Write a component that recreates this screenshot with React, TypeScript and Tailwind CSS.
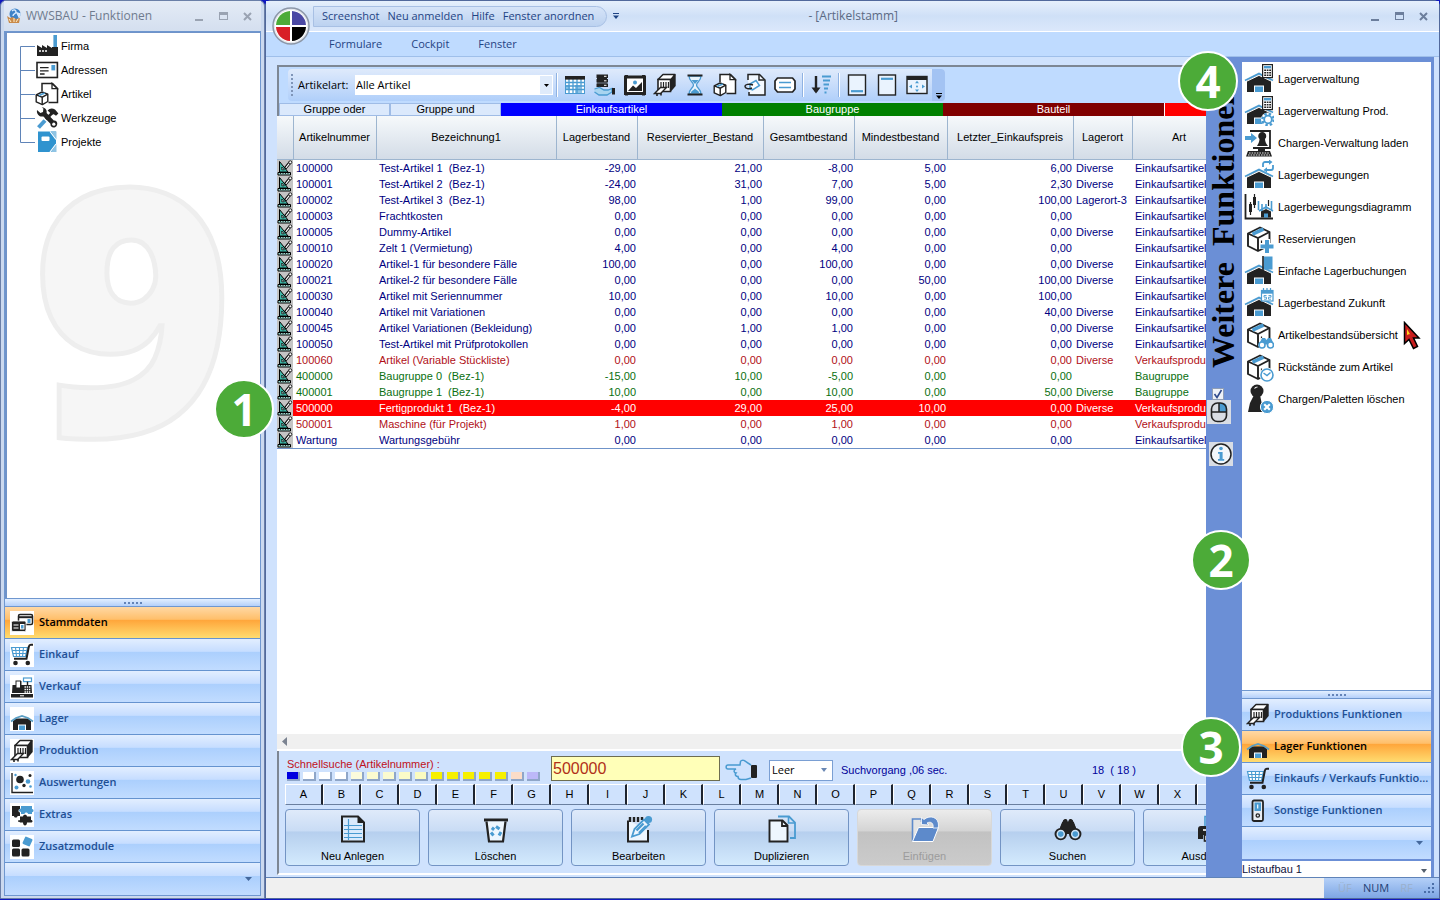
import React from "react";

type IconProps = { size?: number; vb?: number; children?: React.ReactNode; cls?: string };
const D = "#222";
const B = "#4a9bd1";

function Svg({ size = 24, vb = 24, children, cls = "" }: IconProps) {
  return (
    <svg width={size} height={size} viewBox={`0 0 ${vb} ${vb}`} fill="none" className={`shrink-0 ${cls}`} aria-hidden="true">
      {children}
    </svg>
  );
}

/* ---------- drawing parts ---------- */
const House = () => (
  <g>
    <path d="M3 16.5 L15 11 L27 16.5 V28 H3z" fill={D} />
    <path d="M1 16.5 L15 9.6 L29 16.5" stroke={B} strokeWidth="1.8" />
    <path d="M1 18 L15 11.4 L29 18" stroke="#fff" strokeWidth="1" />
    <rect x="10" y="21.5" width="10" height="6.5" fill="#fff" />
    <rect x="11" y="22.5" width="8" height="5.5" fill={B} />
  </g>
);
const Calc = () => (
  <g>
    <rect x="18.6" y="0.6" width="9.8" height="13" fill="#fff" stroke={D} strokeWidth="1.2" />
    <rect x="20" y="2" width="7" height="2.4" fill={B} />
    <path d="M20.2 6.3h6.8M20.2 8.8h6.8M20.2 11.3h6.8" stroke={D} strokeWidth="1.6" strokeDasharray="1.8 .7" />
  </g>
);
const Parcel = () => (
  <g>
    <path d="M4 9.500 L16 3.500 L25.500 8 V21.500 L14 27 L4 22z" fill="#fff" stroke={D} strokeWidth="1.9" strokeLinejoin="round" />
    <path d="M4 9.500 L14 14 L25.500 8 M14 14 V27" stroke={D} strokeWidth="1.9" />
    <path d="M8.500 10.200 L19.500 5.200" stroke={B} strokeWidth="3.6" />
    <path d="M17.500 16.500v4.500" stroke={D} strokeWidth="1.2" />
  </g>
);
const Disc = ({ fill = B }: { fill?: string }) => <circle cx="23" cy="23" r="6.6" fill={fill} stroke="#fff" strokeWidth="1" />;
const SmallBox = () => (
  <g>
    <path d="M1.2 12.8 L7 10 L12.8 12.2 V19.5 L7.4 22.6 L1.2 19.8z" fill="#fff" stroke={D} strokeWidth="1.4" strokeLinejoin="round" />
    <path d="M1.2 12.8 L7.2 15.2 L12.8 12.2 M7.2 15.2 V22.6" stroke={D} strokeWidth="1.4" />
    <path d="M4 13.6 L9.8 11" stroke={B} strokeWidth="1.6" />
  </g>
);
const Lens = () => (
  <g>
    <path d="M8.2 4h3l.8 2 .8-2h3l4.6 11-7 1.4h-2.8L3.6 15z" fill={D} />
    <path d="M7.2 5.5l2-2h1.6v2zM16.8 5.5l-2-2h-1.6v2z" fill={D} />
    <path d="M7 6h10l3 8H4z" fill={D} />
    <circle cx="5.8" cy="16.4" r="4.5" fill="#cfe4f7" stroke={D} strokeWidth="1.7" />
    <circle cx="18.2" cy="16.4" r="4.5" fill="#cfe4f7" stroke={D} strokeWidth="1.7" />
    <circle cx="5.8" cy="16.4" r="2.4" fill={B} />
    <circle cx="18.2" cy="16.4" r="2.4" fill={B} />
  </g>
);

/* ---------- 24px icons ---------- */
const draw: Record<string, React.ReactNode> = {
  factory: (
    <g>
      <path d="M2 22V11l5 3v-3l5 3v-3l5 3v8zM17 13h6v9h-6z" fill={D} />
      <rect x="18.4" y="1" width="3.6" height="12" fill={B} />
      <path d="M4 17h9" stroke="#fff" strokeWidth="1.6" strokeDasharray="2 1" />
    </g>
  ),
  card: (
    <g>
      <rect x="2" y="4.5" width="20.4" height="15" fill="#fff" stroke={D} strokeWidth="1.6" />
      <rect x="16.4" y="7" width="3.8" height="5.4" fill={B} />
      <path d="M5 9.6h8.6M5 12.8h8.6M5 16h4.6" stroke={D} strokeWidth="1.3" />
    </g>
  ),
  docbox: (
    <g>
      <path d="M7 9V1.5h10.5L22.5 6.5V20.5H13.5" fill="#fff" stroke={D} strokeWidth="1.5" />
      <path d="M17 1.5v5.2h5.4z" fill="#fff" stroke={D} strokeWidth="1.3" />
      <SmallBox />
    </g>
  ),
  tools: (
    <g>
      <path d="M3.500 21.500l6.500-7" stroke={B} strokeWidth="4" />
      <path d="M11 13.2L18.6 5.6" stroke={D} strokeWidth="2.8" />
      <path d="M12.6 4.6c2-2.6 5-2.8 7.4-1l3.4 3.8-2.4 2.4-2.2-1.6-2 .4z" fill={D} />
      <path d="M2 4l3.400 3 2.600-1L8.400 2.600 6.600 1.600c3.400-.4 5.800 2.400 5 5.400l7.200 7.600c3-.6 4.600 3 2.600 5.600-2 2.400-6.200 1.600-6-2.400L8.400 10.400C5 11.400 1.200 8.600 2 4z" fill={D} />
      <circle cx="18.8" cy="18.2" r="1.6" fill="#fff" />
    </g>
  ),
  binder: (
    <g>
      <rect x="3" y="1.5" width="18" height="20.5" fill="#2f93cf" />
      <path d="M16 1.500l5.500 8V1.500zM16 22l5.500-8V22z" fill="#8fc4e4" />
      <path d="M15 1.500l6 8M21 14l-6 8" stroke="#fff" strokeWidth="1.2" />
      <rect x="6.5" y="6.5" width="8" height="4.5" rx="1" fill="#fff" />
    </g>
  ),
  cards: (
    <g>
      <rect x="8.5" y="3.5" width="14" height="10" rx="1.5" fill="#fff" stroke={D} strokeWidth="1.5" />
      <path d="M8.500 6.200h14" stroke={D} strokeWidth="2" />
      <rect x="17.5" y="8" width="3" height="4" fill={B} />
      <rect x="1.5" y="10" width="14.5" height="10.5" rx="1.5" fill={D} stroke="#fff" strokeWidth=".8" />
      <rect x="10" y="13" width="4.5" height="5.5" fill="#fff" />
      <rect x="11" y="14" width="2.5" height="3.5" fill={B} />
      <path d="M3.500 14h5M3.500 17h5" stroke="#fff" strokeWidth="1" />
    </g>
  ),
  cart: (
    <g>
      <path d="M1.500 4.500h16l-2 9h-12z" fill="#fff" stroke={B} strokeWidth="1.2" />
      <path d="M2.200 7.500h14.600M2.800 10.500h13.400M5.500 4.500l1 9M9.500 4.500v9M13.500 4.500l-1 9" stroke={B} strokeWidth="1.1" />
      <path d="M23 1.800h-2.200c-1.200 0-1.700.7-2 2L16.500 15.800H4" stroke={D} strokeWidth="2" />
      <circle cx="5.5" cy="20" r="2.3" fill={D} />
      <circle cx="17.8" cy="20" r="2.3" fill={D} />
    </g>
  ),
  register: (
    <g>
      <path d="M2 18l.5-8H6V6h5.500v4H21.500l.5 8z" fill={D} />
      <rect x="6" y="6" width="4.5" height="7" fill="#fff" stroke={D} />
      <rect x="13.5" y="3" width="8" height="3.6" fill="#fff" stroke={B} strokeWidth="1.2" />
      <path d="M17.500 6.600V10" stroke={D} strokeWidth="1.4" />
      <path d="M14.500 12h6M14.500 14.500h6M14.500 17h6" stroke="#fff" strokeWidth="1.3" strokeDasharray="1.4 .8" />
      <rect x="1" y="19" width="22" height="3.5" fill={D} />
      <path d="M10 20.800h4" stroke="#fff" strokeWidth="1" />
    </g>
  ),
  house: (
    <g>
      <path d="M3 14l3-2.500h12L21 14v9H3z" fill={D} />
      <path d="M1 14.500l5-3.500 6-2 6 2 5 3.500" stroke="#5b9fc4" strokeWidth="1.8" />
      <rect x="8" y="17.5" width="8" height="5.5" fill="#fff" />
      <rect x="9" y="18.5" width="6" height="4.5" fill={B} />
    </g>
  ),
  machine: (
    <g>
      <path d="M5 6.500L10 1.500H22l-4 5z" fill="#fff" stroke={D} strokeWidth="1.5" strokeLinejoin="round" />
      <path d="M17.500 6.500L22.700 1.500V13l-5.200 6z" fill={D} />
      <path d="M5 6.500h12.500V18.500H5z" fill="#fff" stroke={D} strokeWidth="1.6" />
      <path d="M8 9v6M10.500 9v6M13 9v6M15.500 9v6" stroke={D} strokeWidth="1.2" />
      <path d="M1.500 20.500L7.500 14.500h6l-6 6z" fill="#fff" stroke={D} strokeWidth="1.4" />
      <path d="M4 20.500v2.500M8 20v2.500" stroke={D} strokeWidth="1.6" />
    </g>
  ),
  scatter: (
    <g>
      <path d="M2 2v19.500h21" stroke={D} strokeWidth="1.4" />
      <circle cx="10" cy="8.5" r="3.8" fill={D} />
      <circle cx="20" cy="4.5" r="1.5" fill={D} />
      <circle cx="14" cy="14.5" r="1.7" fill={D} />
      <circle cx="18" cy="10.5" r="2.3" fill={B} />
      <circle cx="6.5" cy="16.5" r="2" fill={B} />
      <circle cx="5.5" cy="4" r="1.2" fill={B} />
      <circle cx="20.5" cy="15.5" r="1.3" fill={B} />
    </g>
  ),
  puzzle: (
    <g>
      <path d="M2 3h8v3c-2 0-2 3.500 0 3.500V13H7.500c0 2-3.500 2-3.500 0H2z" fill={D} />
      <path d="M11 3h11v3c2 .2 2 3 0 3.200V11h-4c0-2-3.500-2-3.500 0H11V9C8.500 9 8.500 5.500 11 5.500z" fill={B} />
      <path d="M10 13.500h3c0-2.500 4-2.500 4 0h4V17c2 0 2 2.500 0 2.500h-4c0 4-4 4-4 0h-3c0-1-2 0-2-1.500S10 18 10 17z" fill={D} />
    </g>
  ),
  modules: (
    <g fill={D}>
      <rect x="2" y="4.5" width="8" height="7.5" rx="1.5" />
      <rect x="2" y="13.5" width="8" height="8" rx="1.5" />
      <rect x="11.5" y="13.5" width="8" height="8" rx="1.5" />
      <rect x="13.5" y="2.5" width="8" height="8" rx="1" fill={B} transform="rotate(24 17.500 6.500)" />
    </g>
  ),
  grid: (
    <g>
      <rect x="2.5" y="3.5" width="19" height="17" fill="#fff" stroke={B} strokeWidth="1" />
      <path d="M12 12h5v8h-5zM3 12h4v4H3z" fill="#8ec3e6" />
      <path d="M2.500 9.500h19M2.500 13h19M2.500 16.500h19M6 6v14.500M10 6v14.500M14 6v14.500M18 6v14.500" stroke={B} strokeWidth="1.3" />
      <rect x="2" y="3" width="20" height="3.6" fill={D} />
    </g>
  ),
  stackhand: (
    <g>
      <path d="M3.500 1.500h11.500v3.600H3.500zM3.500 6h11.500v3.600H3.500zM3.500 10.500h11.500v3.600H3.500z" fill={D} />
      <path d="M4 5.500h10M4 10h10" stroke={D} strokeWidth="1" />
      <path d="M11 3.300h2.500M11 7.800h2.500M11 12.300h2.500" stroke="#fff" strokeWidth="1" />
      <path d="M1.500 16l5-1.500 4.500 2.500h4l4-1.500v3.500l-5 3H6l-4.500-3" fill="#a8d4f0" stroke={B} strokeWidth="1.3" />
      <path d="M19 15h3v6.500h-3z" fill={D} />
    </g>
  ),
  picture: (
    <g>
      <rect x="2.5" y="4" width="19" height="16.5" fill="#fff" stroke={D} strokeWidth="3" />
      <path d="M2 2.500h3M19 2.500h3M2 22h3M19 22h3" stroke={D} strokeWidth="1.2" />
      <path d="M5 18l5-5.500 3 2.500L19 9v9z" fill={D} />
      <circle cx="12" cy="9.5" r="2" fill={B} />
    </g>
  ),
  hourglass: (
    <g>
      <path d="M6 3c0 5 4.500 6 4.500 9S6 16 6 21h12c0-5-4.500-6-4.500-9S18 8 18 3z" fill="#e9f4fc" stroke={B} strokeWidth="1.3" />
      <path d="M8.500 7h7L12 11zM8 20c0-3 4-3 4-5 0 2 4 2 4 5z" fill={B} />
      <path d="M4.500 2.500h15M4.500 21.500h15" stroke={D} strokeWidth="2.2" />
    </g>
  ),
  doctag: (
    <g>
      <path d="M5 7V1.500h11.500L22 7v15H6v-3" fill="#f3f8fe" stroke={D} strokeWidth="1.5" />
      <path d="M16 1.500v5.500h5.600" stroke={D} strokeWidth="1.4" />
      <path d="M7 11l6-3.500 3.500 5L9.500 17 7 16z" fill="#fff" stroke={B} strokeWidth="1.5" />
      <path d="M10 12c-4-1.500-8-.5-8 1.500s4 3 7 1.500" stroke={D} strokeWidth="1.4" />
    </g>
  ),
  tag: (
    <g>
      <path d="M4.500 5h15l2.500 3v8l-2.500 3h-15L2 16V8z" fill="#fff" stroke={D} strokeWidth="1.7" strokeLinejoin="round" />
      <path d="M6 9.500h12M6 14.500h12" stroke={B} strokeWidth="1.5" />
    </g>
  ),
  sort: (
    <g>
      <path d="M7 3v16" stroke={D} strokeWidth="2.4" />
      <path d="M2.500 14.500L7 20.500l4.500-6z" fill={D} />
      <path d="M13 3.500h9M14 7.500h7M14.500 11.500h5.500M15 15.500h4M15.500 19.500h2" stroke={B} strokeWidth="2.2" />
    </g>
  ),
  winbottom: (
    <g>
      <rect x="3.5" y="2" width="17" height="20" stroke={D} strokeWidth="1.4" fill="#eaf3fe" />
      <path d="M6 18.200h12" stroke={B} strokeWidth="2.2" />
    </g>
  ),
  wintop: (
    <g>
      <rect x="3.5" y="2" width="17" height="20" stroke={D} strokeWidth="1.4" fill="#eaf3fe" />
      <path d="M6 5.800h12" stroke={B} strokeWidth="2.2" />
    </g>
  ),
  winmove: (
    <g>
      <rect x="2" y="3.5" width="20" height="17" fill="#eaf3fe" stroke={D} strokeWidth="1.4" />
      <path d="M2 5.500h20" stroke={D} strokeWidth="3" />
      <path d="M12 7.800l2 2.400h-4zM12 19l2-2.400h-4zM4 13.400l3-2v4zM20 13.400l-3-2v4z" fill={B} />
      <circle cx="12" cy="13.4" r="1" fill={B} />
    </g>
  ),
  switch: (
    <g>
      <rect x="6.5" y="1.5" width="10.5" height="20.5" rx="1.5" fill="#e8edf3" stroke={D} strokeWidth="1.8" />
      <rect x="8.5" y="3.5" width="6.5" height="8.5" fill={B} />
      <path d="M11.700 5.500v4" stroke="#fff" strokeWidth="1.2" />
      <circle cx="11.8" cy="16.5" r="1.7" stroke={D} strokeWidth="1.3" />
    </g>
  ),
  mouse: (
    <g>
      <path d="M12 3h4c2.500 0 4 2 4 4.500V12h-8z" fill={B} />
      <rect x="4.5" y="3" width="15" height="18.5" rx="6" stroke={D} strokeWidth="1.6" />
      <path d="M12 3v9M4.500 12h15" stroke={D} strokeWidth="1.5" />
    </g>
  ),
  info: (
    <g>
      <circle cx="12" cy="12" r="10" fill="#f3f7fb" stroke={D} strokeWidth="1.5" />
      <circle cx="12" cy="6.500" r="1.800" fill={B} />
      <path d="M9 10h4.600v7h1.600v1.800H9V17h1.600v-5.200H9z" fill={B} />
    </g>
  ),
};

/* ---------- action icons, 28px box ---------- */
const action: Record<string, React.ReactNode> = {
  sheet: (
    <g>
      <path d="M3 1.500h16l6 6v19H3z" fill="#d9eafc" stroke={D} strokeWidth="2" />
      <path d="M18.500 1.500v6.500h7z" fill={D} />
      <path d="M5 10.500h18M5 14.500h18M5 18.500h18M5 22.500h18M9.500 4v21" stroke={B} strokeWidth="1.2" />
    </g>
  ),
  trash: (
    <g>
      <path d="M2 3.500h24v3H2z" fill={D} />
      <path d="M4.500 6.500l2.500 20h14l2.500-20" fill="#eef6fe" stroke={D} strokeWidth="2.2" />
      <path d="M14 11.500l3.500 2.500M19 17l-2 3.500M11.500 20.500L9 17.500M10 15l2-2.500" stroke={B} strokeWidth="3" />
    </g>
  ),
  edit: (
    <g>
      <path d="M3 5.500V26.500h20V15" stroke={D} strokeWidth="2" fill="#eef6fe" />
      <path d="M5 2v5M9 2v5M13 2v5M17 2v3" stroke={D} strokeWidth="2.4" />
      <path d="M7 21.500l2.500-7.500L19 4.500l5 5-9.500 9.500z" fill="#eef6fe" stroke={B} strokeWidth="1.8" />
      <path d="M11.500 15.500l7-7M14 18l7-7" stroke={B} strokeWidth="2.4" />
      <circle cx="23.5" cy="4.5" r="3.6" fill={B} />
    </g>
  ),
  copy: (
    <g>
      <path d="M10 1.500h11l6 6V23h-5" stroke={B} strokeWidth="1.8" />
      <path d="M20.500 1.500V8H27" stroke={B} strokeWidth="1.6" />
      <path d="M1.500 5.500h13l5 5v16h-18z" fill="#eef6fe" stroke={D} strokeWidth="1.9" />
      <path d="M14 5.500v5.500h5.500" stroke={D} strokeWidth="1.8" />
    </g>
  ),
  paste: (
    <g>
      <path d="M1.500 26V4h9v3" fill="#e4e4e4" stroke="#5d8acb" strokeWidth="1.6" />
      <path d="M1.500 26.500l6-14h20l-5.500 14z" fill="#5d8acb" stroke="#fff" strokeWidth="1" />
      <path d="M10.500 9.500V2.500l2.500 2c6-5 15-2.500 14.500 6.500l-.5 2h-5c1-5-2.500-7-6-5l2 2z" fill="#5d8acb" stroke="#fff" strokeWidth=".8" />
    </g>
  ),
  search: <g transform="scale(1.166)"><Lens /></g>,
  print: (
    <g>
      <path d="M8 12V1.500h12V12" fill="#eef6fe" stroke={B} strokeWidth="1.6" />
      <path d="M4 11h20c2 0 3 1.500 3 3v10H22v-4H6v4H1V14c0-2 1-3 3-3z" fill={D} />
      <path d="M6 15h10" stroke="#fff" strokeWidth="1.6" />
      <rect x="7.5" y="20" width="13" height="6" fill="#fff" stroke={D} strokeWidth="1.6" />
    </g>
  ),
};

/* ---------- side list icons, 30px box ---------- */
const side: { label: string; icon: React.ReactNode }[] = [
  { label: "Lagerverwaltung", icon: <><House /><Calc /></> },
  {
    label: "Lagerverwaltung Prod.",
    icon: (
      <>
        <House /><Calc />
        <circle cx="24" cy="23.5" r="7" fill="#fff" />
        <circle cx="24" cy="23.5" r="5.6" stroke={B} strokeWidth="2.4" strokeDasharray="2.4 2" />
        <circle cx="24" cy="23.5" r="3.8" fill="#fff" stroke={B} strokeWidth="1.8" />
      </>
    ),
  },
  {
    label: "Chargen-Verwaltung laden",
    icon: (
      <>
        <path d="M6 3h20v17H9" stroke={D} strokeWidth="1.8" />
        <path d="M13 18c1-2 2.500-4 2.500-7a4 4 0 1 1 5.500 0c0 3 1.500 5 3 7z" fill={D} />
        <path d="M1 8h6V5l6 5-6 5v-3H1z" fill={B} />
        <path d="M14 20h7v3h-7z" fill={D} />
        <path d="M4 23h22l2 5.500H2z" fill={D} />
        <path d="M5 25h20M4 27h22" stroke="#fff" strokeWidth=".9" strokeDasharray="1.6 1" />
      </>
    ),
  },
  {
    label: "Lagerbewegungen",
    icon: (
      <>
        <House />
        <path d="M19 7V4a2 2 0 0 1 2-2h5M29 5v3a2 2 0 0 1-2 2h-5" stroke={B} strokeWidth="1.8" />
        <path d="M25 -.5l3.500 2.500L25 4.800zM23 7.200L19.500 10l3.500 2.500z" fill={B} />
      </>
    ),
  },
  {
    label: "Lagerbewegungsdiagramm",
    icon: (
      <>
        <path d="M1.500 2v24.500H29" stroke={D} strokeWidth="1.8" />
        <path d="M6.500 10v13M10.500 2v14" stroke={D} strokeWidth="1.2" />
        <path d="M5 12h3v8H5zM9 5h3v8H9z" fill={D} />
        <path d="M14.500 9v9M18 12v9M22 12v5M27.500 9v9" stroke={B} strokeWidth="1.6" />
        <path d="M15 19l7-4 7 4" stroke={B} strokeWidth="1.6" />
        <path d="M17 19.500l5-2.500 5 2.500v6H17z" fill={D} />
        <rect x="20" y="21.5" width="4" height="4" fill={B} />
        <path d="M24.500 8v6" stroke={D} strokeWidth="1.2" />
      </>
    ),
  },
  {
    label: "Reservierungen",
    icon: (<><Parcel /><path d="M23 15v14M16 22h14" stroke="#fff" strokeWidth="6" /><path d="M23 16v13M16.500 22.500h13" stroke={B} strokeWidth="4" /></>),
  },
  {
    label: "Einfache Lagerbuchungen",
    icon: (<><House /><rect x="19.5" y="0.5" width="9" height="13" fill={B} /><path d="M19 0v14" stroke={D} strokeWidth="1.6" /></>),
  },
  {
    label: "Lagerbestand Zukunft",
    icon: (
      <>
        <House />
        <rect x="17.5" y="2.5" width="11.5" height="10.5" fill="#fff" stroke={B} strokeWidth="1.2" />
        <path d="M17.500 4.200h11.500" stroke={B} strokeWidth="3" />
        <path d="M19.500 0v3M23 0v3M26.500 0v3" stroke={B} strokeWidth="1.2" />
        <path d="M22.500 7.500h-2.500v1.700h2.500v2H20M24.500 7.500h2.500v1.700h-2.500v2H27" stroke={B} strokeWidth=".9" />
      </>
    ),
  },
  {
    label: "Artikelbestandsübersicht",
    icon: (
      <>
        <Parcel />
        <path d="M14 26l3-8h12l2 8z" fill="#fff" />
        <path d="M15 24.500l3-6.500h3l1.500 2 1.500-2h3l3 6.500z" fill={B} />
        <circle cx="18" cy="25" r="3" fill="#fff" stroke={B} strokeWidth="1.6" />
        <circle cx="26.5" cy="25" r="3" fill="#fff" stroke={B} strokeWidth="1.6" />
      </>
    ),
  },
  {
    label: "Rückstände zum Artikel",
    icon: (<><Parcel /><circle cx="23" cy="23" r="7.5" fill="#fff" /><circle cx="23" cy="23" r="6" fill="#fff" stroke={B} strokeWidth="1.6" /><path d="M19.500 21l3.500 2.500 3.500-3" stroke={B} strokeWidth="1.5" /></>),
  },
  {
    label: "Chargen/Paletten löschen",
    icon: (
      <>
        <circle cx="13" cy="7" r="6.5" fill={D} />
        <path d="M10 11h6l3.500 17H4l2-9z" fill={D} />
        <path d="M10.500 4.500a4 4 0 0 1 3-1.500" stroke="#fff" strokeWidth="1.2" />
        <Disc />
        <path d="M20.200 20.200l5.600 5.600M25.800 20.200l-5.600 5.600" stroke="#fff" strokeWidth="2.2" />
      </>
    ),
  },
];

const tree = [
  ["Firma", "factory"],
  ["Adressen", "card"],
  ["Artikel", "docbox"],
  ["Werkzeuge", "tools"],
  ["Projekte", "binder"],
];

const leftNav = [
  ["Stammdaten", "cards"],
  ["Einkauf", "cart"],
  ["Verkauf", "register"],
  ["Lager", "house"],
  ["Produktion", "machine"],
  ["Auswertungen", "scatter"],
  ["Extras", "puzzle"],
  ["Zusatzmodule", "modules"],
];

const rightNav = [
  ["Produktions Funktionen", "machine"],
  ["Lager Funktionen", "house"],
  ["Einkaufs / Verkaufs Funktio...", "cart"],
  ["Sonstige Funktionen", "switch"],
];

type Tone = "blue" | "red" | "green" | "sel";
type Row = [string, string, string, string, string, string, string, string, string, Tone];
const E = "Einkaufsartikel";
const V = "Verkaufsprodukt";
const rows: Row[] = [
  ["100000", "Test-Artikel 1  (Bez-1)", "-29,00", "21,00", "-8,00", "5,00", "6,00", "Diverse", E, "blue"],
  ["100001", "Test-Artikel 2  (Bez-1)", "-24,00", "31,00", "7,00", "5,00", "2,30", "Diverse", E, "blue"],
  ["100002", "Test-Artikel 3  (Bez-1)", "98,00", "1,00", "99,00", "0,00", "100,00", "Lagerort-3", E, "blue"],
  ["100003", "Frachtkosten", "0,00", "0,00", "0,00", "0,00", "0,00", "", E, "blue"],
  ["100005", "Dummy-Artikel", "0,00", "0,00", "0,00", "0,00", "0,00", "Diverse", E, "blue"],
  ["100010", "Zelt 1 (Vermietung)", "4,00", "0,00", "4,00", "0,00", "0,00", "", E, "blue"],
  ["100020", "Artikel-1 für besondere Fälle", "100,00", "0,00", "100,00", "0,00", "0,00", "Diverse", E, "blue"],
  ["100021", "Artikel-2 für besondere Fälle", "0,00", "0,00", "0,00", "50,00", "100,00", "Diverse", E, "blue"],
  ["100030", "Artikel mit Seriennummer", "10,00", "0,00", "10,00", "0,00", "100,00", "", E, "blue"],
  ["100040", "Artikel mit Variationen", "0,00", "0,00", "0,00", "0,00", "40,00", "Diverse", E, "blue"],
  ["100045", "Artikel Variationen (Bekleidung)", "0,00", "1,00", "1,00", "0,00", "0,00", "Diverse", E, "blue"],
  ["100050", "Test-Artikel mit Prüfprotokollen", "0,00", "0,00", "0,00", "0,00", "0,00", "Diverse", E, "blue"],
  ["100060", "Artikel (Variable Stückliste)", "0,00", "0,00", "0,00", "0,00", "0,00", "Diverse", V, "red"],
  ["400000", "Baugruppe 0  (Bez-1)", "-15,00", "10,00", "-5,00", "0,00", "0,00", "", "Baugruppe", "green"],
  ["400001", "Baugruppe 1  (Bez-1)", "10,00", "0,00", "10,00", "0,00", "50,00", "Diverse", "Baugruppe", "green"],
  ["500000", "Fertigprodukt 1  (Bez-1)", "-4,00", "29,00", "25,00", "10,00", "0,00", "Diverse", V, "sel"],
  ["500001", "Maschine (für Projekt)", "1,00", "0,00", "1,00", "0,00", "0,00", "", V, "red"],
  ["Wartung", "Wartungsgebühr", "0,00", "0,00", "0,00", "0,00", "0,00", "", E, "blue"],
];
const tones: Record<Tone, string> = {
  blue: "text-[#00007f]",
  red: "text-[#b01018]",
  green: "text-[#0a7010]",
  sel: "bg-[#ff0000] text-white",
};
const heads = ["Artikelnummer", "Bezeichnung1", "Lagerbestand", "Reservierter_Bestand", "Gesamtbestand", "Mindestbestand", "Letzter_Einkaufspreis", "Lagerort", "Art"];

const blocks = [
  "bg-[#0000e0]", "bg-white", "bg-white", "bg-white", "bg-[#fbfbdc]", "bg-[#fbfbd0]", "bg-[#fbfbd0]", "bg-[#fbfbc8]", "bg-[#fbfbc0]",
  "bg-[#f6f000]", "bg-[#f6f000]", "bg-[#f6f000]", "bg-[#f6f000]", "bg-[#f6f000]", "bg-[#fbdcc8]", "bg-[#bcb8f8]",
];

const actions: [string, string][] = [
  ["Neu Anlegen", "sheet"],
  ["Löschen", "trash"],
  ["Bearbeiten", "edit"],
  ["Duplizieren", "copy"],
  ["Einfügen", "paste"],
  ["Suchen", "search"],
  ["Ausdrucken", "print"],
];

const sans = "font-['Liberation_Sans',Arial,sans-serif]";
const ui = "font-['Open_Sans','Noto_Sans',sans-serif]";

function WinButtons({ tone }: { tone: string }) {
  return (
    <div className={`ml-auto flex items-center gap-3 ${tone}`}>
      <button aria-label="Minimieren" className="flex h-3 w-3 items-end justify-center pb-px"><span className="h-0.5 w-2 bg-current" /></button>
      <button aria-label="Maximieren" className="flex h-3 w-3 items-center justify-center"><span className="h-2 w-[9px] border border-t-[3px] border-current" /></button>
      <button aria-label="Schließen" className="flex h-3 w-3 items-center justify-center">
        <svg width="9" height="9" viewBox="0 0 9 9"><path d="M1 1l7 7M8 1L1 8" stroke="currentColor" strokeWidth="2" /></svg>
      </button>
    </div>
  );
}

function Splitter() {
  return (
    <div className="flex h-[9px] shrink-0 items-center justify-center gap-0.5 border-y border-[#6f97cf] bg-gradient-to-b from-[#e3efff] to-[#b4d0fa]">
      {[0, 1, 2, 3, 4].map((i) => <span key={i} className="h-0.5 w-0.5 bg-[#6484b8]" />)}
    </div>
  );
}

function NavItem({ label, icon, active, tile }: { label: string; icon: string; active: boolean; tile?: boolean }) {
  const bg = active
    ? "bg-[linear-gradient(#ffd8a4,#ffbf6a_40%,#ffa53a_42%,#ffdc70)] text-black"
    : "bg-[linear-gradient(#e2eeff,#c6ddff_40%,#abcffd_42%,#c1dcff)] text-[#1f4f94]";
  return (
    <button className={`flex h-8 w-full shrink-0 items-center border-b border-[#6593cf] text-left text-[11px] font-semibold whitespace-nowrap ${tile ? "gap-[5px] pl-[5px]" : "gap-1 pl-1"} ${ui} ${bg}`}>
      <span className={tile ? "bg-white" : ""}><Svg>{draw[icon]}</Svg></span>
      <span>{label}</span>
    </button>
  );
}

function NavFoot() {
  return (
    <button aria-label="Schaltflächen konfigurieren" className="flex h-8 w-full shrink-0 items-center justify-end bg-[linear-gradient(#e2eeff,#c6ddff_40%,#abcffd_42%,#c1dcff)] pr-2">
      <svg width="7" height="4" viewBox="0 0 7 4"><path d="M0 0h7L3.500 4z" fill="#44689c" /></svg>
    </button>
  );
}

function Badge({ n, place }: { n: string; place: string }) {
  return (
    <div className={`absolute z-20 flex h-[60px] w-[60px] items-center justify-center rounded-full border-2 border-white bg-[#4cab38] text-[44px] leading-none font-bold text-white ${ui} ${place}`}>
      {n}
    </div>
  );
}

function RowMark() {
  return (
    <svg width="16" height="16" viewBox="0 0 16 16" className="block" aria-hidden="true">
      <rect width="16" height="16" fill="#c4c4c4" />
      <path d="M2.500 1.500v10.500h8.500z" fill="#3fb8a8" stroke="#000" />
      <path d="M4.800 7v2.800h2.500z" fill="#fff" stroke="#000" strokeWidth=".8" />
      <path d="M1 12.500h12.500v2.500H1z" fill="#9fd8d0" stroke="#000" />
      <path d="M3.500 12.500v1.500M6 12.500v1.500M8.500 12.500v1.500M11 12.500v1.500" stroke="#000" strokeWidth=".8" />
      <path d="M8 8.500l5-6" stroke="#000" strokeWidth="3" />
      <path d="M8.800 7.800l4-5" stroke="#fff" strokeWidth="1.2" />
      <circle cx="13.3" cy="2.3" r="1.5" fill="#fff" stroke="#000" strokeWidth=".8" />
    </svg>
  );
}

function LeftWindow() {
  return (
    <section className="relative flex w-[265px] shrink-0 flex-col rounded-t-md border border-[#6a7fa8] bg-[#cbd9ef] px-[3px] pb-0.5">
      <header className="flex h-[30px] shrink-0 items-center gap-1 bg-gradient-to-b from-[#e4ebf6] to-[#d4dfef] px-0.5 pr-2">
        <Svg size={16} vb={16}>
          <circle cx="9" cy="6" r="5.5" fill="#3c82c8" />
          <path d="M6 3c2-2 4-1 4 1s-3 1-3 4M11 5l3 1-1 3z" stroke="#d7eaff" strokeWidth="1.4" />
          <path d="M1 8l3 2 3-1 3 2 4-1-1 5H3z" fill="#c98a4a" />
          <path d="M3 11l2 3M8 10v4M12 11l-2 3" stroke="#fff2d0" strokeWidth="1" />
        </Svg>
        <h1 className={`text-xs text-[#6f7b8e] ${ui}`}>WWSBAU - Funktionen</h1>
        <WinButtons tone="text-[#9aa3b2]" />
      </header>
      <div className="flex min-h-0 flex-1 flex-col border border-[#6f97cf]">
        <div className="relative min-h-0 flex-1 overflow-hidden border-t border-l-2 border-[#6f93c9] bg-white">
          <div aria-hidden="true" className="absolute top-[98px] left-[25px] font-['Open_Sans','Noto_Sans',sans-serif] text-[344px] leading-[344px] font-extrabold text-[#f6f6f6] [-webkit-text-stroke:5px_#eeeeee]">9</div>
          <ul className={`relative pt-px pl-[13px] text-[11px] text-black ${sans}`}>
            {tree.map(([label, icon], i) => (
              <li key={label}>
                <a href="#" className="flex h-6 items-center">
                  <svg width="15" height="24" viewBox="0 0 15 24" fill="none" aria-hidden="true">
                    <path d={i === 0 ? "M.5 24V12.500H15" : i === tree.length - 1 ? "M.5 0V12.500H15" : "M.5 0V24M0 12.500H15"} stroke="#5f84b8" />
                  </svg>
                  <Svg size={24}>{draw[icon]}</Svg>
                  <span className="pl-0.5">{label}</span>
                </a>
              </li>
            ))}
          </ul>
        </div>
        <Splitter />
        <nav className="flex flex-col">
          {leftNav.map(([label, icon], i) => <NavItem key={label} label={label} icon={icon} active={i === 0} tile />)}
          <NavFoot />
        </nav>
      </div>
      <Badge n="1" place="top-[378px] left-[213px]" />
    </section>
  );
}

function Toolbar() {
  const tool = (k: string) => (
    <button key={k} aria-label={k} className="flex h-7 w-[30px] items-center justify-center"><Svg>{draw[k]}</Svg></button>
  );
  const sep = <span className="mx-0.5 h-6 w-0.5 border-l border-[#8fb2e2] bg-white" />;
  return (
    <div className="flex h-9 shrink-0 items-center pl-[9px]">
      <div className="flex h-8 items-center rounded bg-gradient-to-b from-[#dfeafb] to-[#b0cffa] pl-[3px]">
        <svg width="2" height="22" viewBox="0 0 2 22" aria-hidden="true"><path d="M1 0v22" stroke="#7f95b8" strokeWidth="2" strokeDasharray="2 2" /></svg>
        <label htmlFor="art" className={`w-[62px] pl-[5px] text-[11px] text-black ${ui}`}>Artikelart:</label>
        <div className="relative mr-px">
          <select id="art" className={`block h-5 w-[198px] appearance-none border border-white bg-white text-[11px] text-black ${ui}`}><option>Alle Artikel</option></select>
          <span className="pointer-events-none absolute top-px right-px flex h-[18px] w-3 items-center justify-center bg-[#dfebfb]">
            <svg width="5" height="3" viewBox="0 0 5 3"><path d="M0 0h5L2.500 3z" fill="#000" /></svg>
          </span>
        </div>
        {sep}
        {["grid", "stackhand", "picture", "machine", "hourglass", "docbox", "doctag", "tag"].map(tool)}
        {sep}
        {tool("sort")}
        {sep}
        {["winbottom", "wintop", "winmove"].map(tool)}
        <span className="flex h-8 w-[13px] items-end justify-center rounded-r bg-[#a3c3f3] pb-0.5">
          <svg width="6" height="6" viewBox="0 0 6 6"><path d="M0 .5h6" stroke="#000" /><path d="M0 2.500h6L3 6z" fill="#000" /></svg>
        </span>
      </div>
    </div>
  );
}

function Grid() {
  return (
    <div className="min-h-0 flex-1 overflow-hidden bg-white">
      <table className={`w-[949px] table-fixed border-collapse text-[11px] ${sans}`}>
        <colgroup>
          <col className="w-4" /><col className="w-[83px]" /><col className="w-[180px]" /><col className="w-[81px]" /><col className="w-[126px]" />
          <col className="w-[91px]" /><col className="w-[93px]" /><col className="w-[126px]" /><col className="w-[59px]" /><col className="w-[94px]" />
        </colgroup>
        <thead>
          <tr className="h-[43px] bg-gradient-to-b from-[#f6f9fb] to-[#d3dce7]">
            <th aria-label="Status" className="border-r border-b border-[#9db5cf]" />
            {heads.map((h) => <th key={h} className="border-r border-b border-[#9db5cf] p-0 text-center font-normal text-black">{h}</th>)}
          </tr>
        </thead>
        <tbody>
          {rows.map((r) => (
            <tr key={r[0]} className={`h-4 leading-4 last:border-b last:border-[#6f93c9] ${tones[r[9]]}`}>
              <td className="p-0"><RowMark /></td>
              {r.slice(0, 9).map((c, i) => (
                <td key={i} className={`overflow-hidden py-0 whitespace-pre ${i >= 2 && i <= 6 ? "pr-px text-right" : "pl-[3px] text-left"}`}>{c}</td>
              ))}
            </tr>
          ))}
        </tbody>
      </table>
    </div>
  );
}

function SearchPanel() {
  return (
    <div className={`shrink-0 overflow-hidden border-b-2 border-l-2 border-b-white border-l-[#7d8794] bg-[#cfe2fd] pt-0.5 pb-[7px] pl-1.5 ${sans}`}>
      <div className="flex h-[31px] items-end pb-[3px]">
        <div className="w-[266px] shrink-0 pl-0.5">
          <label htmlFor="quick" className="block text-[11px] leading-4 text-[#c01020]">Schnellsuche (Artikelnummer) :</label>
          <div className="flex gap-[3px]">
            {blocks.map((b, i) => <span key={i} className={`h-[9px] w-[13px] border-r-2 border-b-2 border-[#8fa6c8] ${b}`} />)}
          </div>
        </div>
        <input id="quick" defaultValue="500000" className="h-[25px] w-[169px] shrink-0 border border-[#6d6d50] bg-[#ffffb8] pl-px text-base text-[#b03018]" />
        <svg width="32" height="22" viewBox="0 0 32 22" fill="none" className="ml-[5px] shrink-0" aria-hidden="true">
          <path d="M26 6l-7-4.500c-1-.7-3 0-3.500 1L15 6H3C.5 6 .5 10 3 10h8c-3 1-2 4 0 4-1.500 2 0 3.500 2 3.500 0 2 1 3 3 3h5l5-1.500" stroke={B} strokeWidth="1.5" />
          <rect x="26" y="6" width="6" height="13" rx="1" fill={D} />
        </svg>
        <div className="relative ml-3 shrink-0">
          <select aria-label="Filter" className={`block h-[21px] w-16 appearance-none border border-[#7a9fd3] bg-white pl-0.5 text-[11px] text-black ${ui}`}><option>Leer</option></select>
          <svg width="6" height="4" viewBox="0 0 6 4" className="pointer-events-none absolute top-2 right-1.5"><path d="M0 0h6L3 4z" fill="#6a88b4" /></svg>
        </div>
        <span className="w-[259px] shrink-0 pl-2 text-[11px] leading-[21px] text-[#00009a]">Suchvorgang ,06 sec.</span>
        <span className="shrink-0 text-[11px] leading-[21px] whitespace-pre text-[#00009a]">18  ( 18 )</span>
      </div>
      <div className="flex h-[21px]">
        {"ABCDEFGHIJKLMNOPQRSTUVWXY".split("").map((c) => (
          <button key={c} className="w-[38px] shrink-0 border-t border-r-2 border-b border-l border-t-white border-r-[#1d2430] border-b-[#6a7f9f] border-l-white text-[11px] text-black">{c}</button>
        ))}
      </div>
      <div className="mt-1 flex gap-2">
        {actions.map(([label, icon]) => {
          const off = label === "Einfügen";
          const look = off
            ? "border-[#d8d8d8] bg-[linear-gradient(#ececec,#d4d4d4_38%,#c2c2c2_40%,#cbcbcb)] text-[#9c9c9c]"
            : "border-[#7394c4] bg-[linear-gradient(#dfeafa,#c9dcf5_38%,#b6cfee_40%,#d3eafd)] text-black";
          return (
            <button key={label} disabled={off} className={`flex h-[57px] w-[135px] shrink-0 flex-col items-center justify-between rounded-sm border pt-[5px] pb-px text-[11px] leading-4 ${look}`}>
              <Svg size={28} vb={28}>{action[icon]}</Svg>
              <span>{label}</span>
            </button>
          );
        })}
      </div>
    </div>
  );
}

function SideBar() {
  return (
    <aside className="relative flex w-[36px] shrink-0 flex-col items-center bg-[#6b8fd6]">
      <div className="mr-0.5 h-[311px] shrink-0 rotate-180 font-['Liberation_Serif','Times_New_Roman',serif] text-[32px] leading-[34px] font-bold whitespace-pre text-black [writing-mode:vertical-rl]">Weitere  Funktionen</div>
      <label className="mt-5 mr-3 flex h-3 w-3 shrink-0 items-center justify-center border border-[#8f9db5] bg-[#eef2f8]">
        <input type="checkbox" defaultChecked aria-label="Mausfunktion" className="peer sr-only" />
        <svg width="10" height="10" viewBox="0 0 10 10" fill="none"><path d="M1.500 5l2.500 3.500L8.500 1" stroke="#2f4a8c" strokeWidth="1.6" /></svg>
      </label>
      <button aria-label="Maus" className="mr-2.5 bg-[#d9dde4]"><Svg>{draw.mouse}</Svg></button>
      <button aria-label="Info" className="mt-[18px] mr-1.5 bg-[#d9dde4]"><Svg>{draw.info}</Svg></button>
      <Badge n="2" place="top-[473px] left-[-15px]" />
      <Badge n="3" place="top-[660px] left-[-25px]" />
      <Badge n="4" place="top-[-6px] left-[-28px]" />
    </aside>
  );
}

function FunctionPanel() {
  return (
    <section className="flex w-[192px] shrink-0 flex-col border-t-[5px] border-r-[3px] border-[#6b8fd6]">
      <ul className={`relative min-h-0 flex-1 bg-white pt-px pl-0.5 text-[11px] text-black ${sans}`}>
        {side.map((s) => (
          <li key={s.label}>
            <a href="#" className="flex h-8 items-center gap-1"><Svg size={30} vb={30}>{s.icon}</Svg>{s.label}</a>
          </li>
        ))}
        <li aria-hidden="true" className="absolute top-[259px] right-2.5">
          <svg width="18" height="30" viewBox="0 0 18 30">
            <path d="M1.500 1.500v21l4.500-4 4.500 9 4-2-4-8.500h5.500z" fill="#c81e1e" stroke="#000" strokeWidth="1.5" />
            <path d="M4 8v6l2.500-1 1 1z" fill="#ffd21e" />
          </svg>
        </li>
      </ul>
      <Splitter />
      <nav className="flex flex-col overflow-hidden">
        {rightNav.map(([label, icon], i) => <NavItem key={label} label={label} icon={icon} active={i === 1} />)}
        <NavFoot />
      </nav>
      <div className="relative border-t-2 border-[#6b8fd6]">
        <select aria-label="Listaufbau" className={`block h-4 w-full appearance-none bg-white text-[11px] text-[#10103c] ${sans}`}><option>Listaufbau 1</option></select>
        <svg width="6" height="4" viewBox="0 0 6 4" className="pointer-events-none absolute top-2 right-1"><path d="M0 0h6L3 4z" fill="#55606e" /></svg>
      </div>
    </section>
  );
}

function MainWindow() {
  return (
    <section className="relative flex min-w-0 flex-1 flex-col rounded-t-md border border-[#51699c] bg-[#cfe2fd]">
      <header className={`flex h-[30px] shrink-0 items-center bg-[linear-gradient(#e6f0fc,#cfe0f7_50%,#dbe8fb)] pr-2.5 text-[11px] text-[#1f4484] ${ui}`}>
        <div className="ml-[47px] flex h-[21px] items-center gap-2 rounded-r-full border border-[#a8c0e4] bg-gradient-to-b from-[#d6e4f8] to-[#bcd2f0] pr-3 pl-2">
          <a href="#">Screenshot</a><a href="#">Neu anmelden</a><a href="#">Hilfe</a><a href="#">Fenster anordnen</a>
        </div>
        <svg width="6" height="6" viewBox="0 0 6 6" className="ml-1.5" aria-hidden="true"><path d="M0 .5h6" stroke="#1f4484" /><path d="M0 2.500h6L3 6z" fill="#1f4484" /></svg>
        <h2 className="flex-1 pr-[282px] text-center text-xs text-[#5b6a84]">- [Artikelstamm]</h2>
        <WinButtons tone="text-[#6c7e9c]" />
      </header>
      <nav className={`flex h-[26px] shrink-0 items-center gap-[29px] border-y border-t-white border-b-[#9fbfea] bg-[#bfdbff] pl-[63px] text-[11px] text-[#1f4484] ${ui}`}>
        <a href="#">Formulare</a><a href="#">Cockpit</a><a href="#">Fenster</a>
      </nav>
      <button aria-label="Anwendungsmenü" className="absolute top-[5px] left-[5px] z-10">
        <svg width="40" height="40" viewBox="0 0 40 40">
          <circle cx="20" cy="20" r="18" fill="#e4e8ee" stroke="#8c97a8" strokeWidth="1.5" />
          <circle cx="20" cy="20" r="16" fill="#fff" />
          <path d="M19 19H5A15 15 0 0 1 19 5z" fill="#4cab38" />
          <path d="M21 19V5A15 15 0 0 1 35 19z" fill="#4a48a4" />
          <path d="M19 21v14A15 15 0 0 1 5 21z" fill="#d81f26" />
          <path d="M21 21h14A15 15 0 0 1 21 35z" fill="#000" />
        </svg>
      </button>
      <div className="flex min-h-0 flex-1 pr-[5px] pl-[11px]">
        <div className="flex min-w-0 flex-1 flex-col pt-2 pb-0.5">
          <div className="flex shrink-0 flex-col border-t-2 border-l-2 border-[#7d8794] bg-[#bfdbff]">
            <Toolbar />
            <div className={`flex h-[13px] overflow-hidden text-[11px] leading-[13px] ${sans}`}>
              <button className="w-[111px] shrink-0 border border-[#9fbce6] bg-[#dbe9fc] leading-[11px] text-black">Gruppe oder</button>
              <button className="w-[111px] shrink-0 border border-[#9fbce6] bg-[#dbe9fc] leading-[11px] text-black">Gruppe und</button>
              <button className="w-[221px] shrink-0 bg-[#0000ff] text-white">Einkaufsartikel</button>
              <button className="w-[221px] shrink-0 bg-[#008000] text-white">Baugruppe</button>
              <button className="w-[222px] shrink-0 border-r border-white bg-[#800000] text-white">Bauteil</button>
              <button aria-label="Verkaufsprodukt" className="flex-1 bg-[#ff0000]" />
            </div>
          </div>
          <Grid />
          <div className="flex h-[17px] shrink-0 items-center border-b-2 border-white bg-[#f0f0f0] pl-[5px]">
            <svg width="5" height="9" viewBox="0 0 5 9" aria-hidden="true"><path d="M5 0v9L0 4.500z" fill="#7b8391" /></svg>
          </div>
          <SearchPanel />
        </div>
        <SideBar />
        <FunctionPanel />
      </div>
      <footer className={`flex h-[21px] shrink-0 border-t border-[#5f83b8] bg-[#f0f0f0] ${ui}`}>
        <div className="ml-auto flex w-[115px] items-center justify-between bg-gradient-to-b from-[#b4d0f8] to-[#7ea6e4] px-1 pl-3.5 text-[11px] text-[#1f3f74]">
          <span className="text-[#9ab0cc]">ÜF</span>
          <span>NUM</span>
          <span className="text-[#9ab0cc]">RF</span>
          <svg width="11" height="11" viewBox="0 0 11 11" fill="#4a6ea8" aria-hidden="true"><path d="M8 0h2v2H8zM4 4h2v2H4zM8 4h2v2H8zM0 8h2v2H0zM4 8h2v2H4zM8 8h2v2H8z" /></svg>
        </div>
      </footer>
    </section>
  );
}

export default function App() {
  return (
    <main className="flex h-screen min-h-[700px] overflow-hidden bg-[#1018c0] pb-px">
      <LeftWindow />
      <MainWindow />
    </main>
  );
}
